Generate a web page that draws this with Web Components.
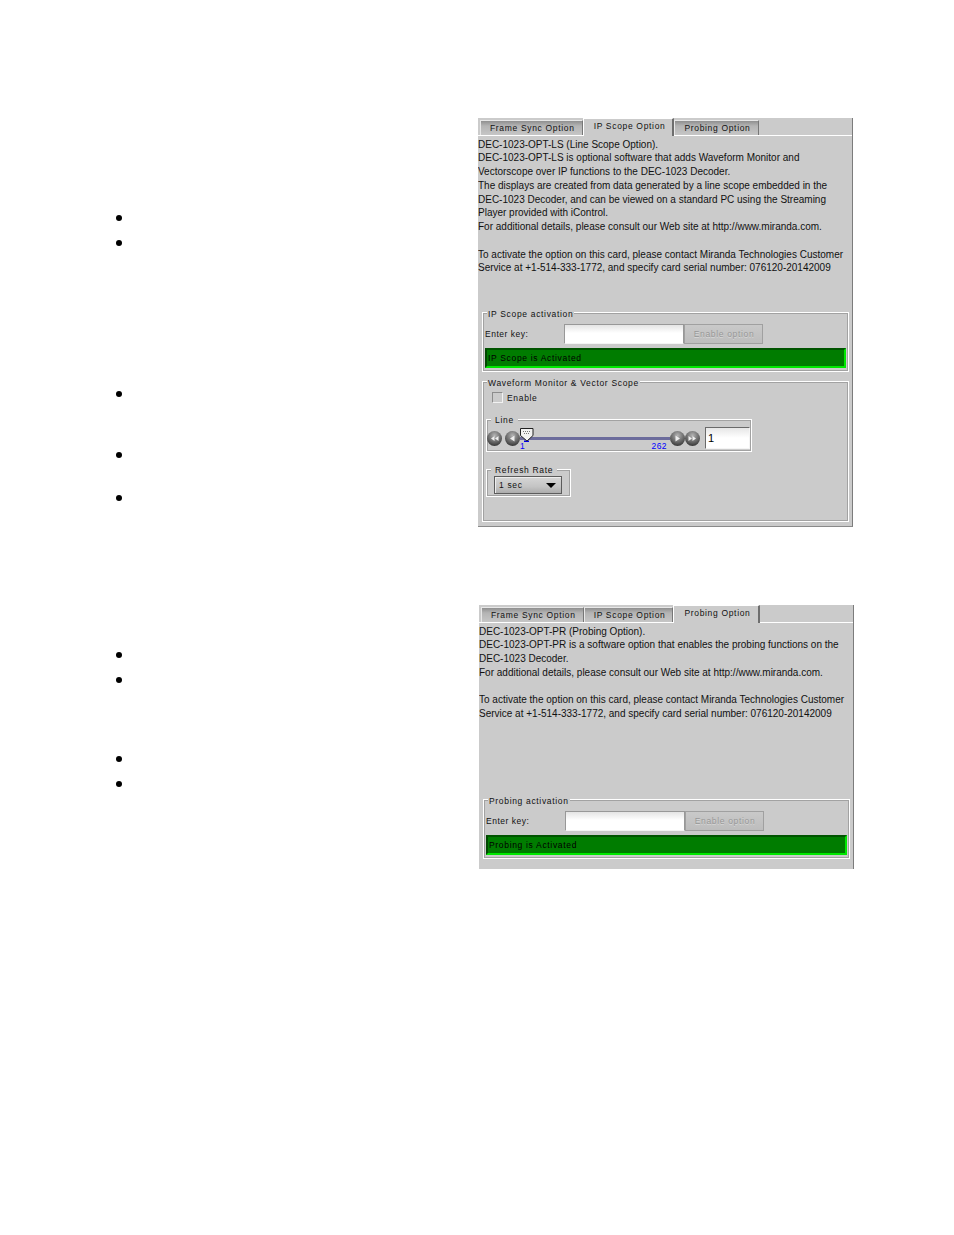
<!DOCTYPE html>
<html>
<head>
<meta charset="utf-8">
<title>DEC-1023 options</title>
<style>
  html, body { margin: 0; background: #fff; }
  body { font-family: "Liberation Sans", Arial, sans-serif; color: #000; }
</style>
</head>
<body>
<doc-page>
  <doc-row col="478" height="409" bullets="100,125,276,337,380">
    <option-panel closed tabs="Frame Sync Option|IP Scope Option|Probing Option" active="1">
      <panel-text style="height:176px">DEC-1023-OPT-LS (Line Scope Option).
DEC-1023-OPT-LS is optional software that adds Waveform Monitor and
Vectorscope over IP functions to the DEC-1023 Decoder.
The displays are created from data generated by a line scope embedded in the
DEC-1023 Decoder, and can be viewed on a standard PC using the Streaming
Player provided with iControl.
For additional details, please consult our Web site at http://www.miranda.com.

To activate the option on this card, please contact Miranda Technologies Customer
Service at +1-514-333-1772, and specify card serial number: 076120-20142009</panel-text>
      <activation-box legend="IP Scope activation" status="IP Scope is Activated"></activation-box>
      <scope-box></scope-box>
    </option-panel>
  </doc-row>
  <doc-row col="479" height="264" bullets="50,75,154,179" style="margin-top:78px">
    <option-panel tabs="Frame Sync Option|IP Scope Option|Probing Option" active="2">
      <panel-text style="height:176px">DEC-1023-OPT-PR (Probing Option).
DEC-1023-OPT-PR is a software option that enables the probing functions on the
DEC-1023 Decoder.
For additional details, please consult our Web site at http://www.miranda.com.

To activate the option on this card, please contact Miranda Technologies Customer
Service at +1-514-333-1772, and specify card serial number: 076120-20142009</panel-text>
      <activation-box legend="Probing activation" status="Probing is Activated"></activation-box>
    </option-panel>
  </doc-row>
</doc-page>

<script>
const panelBg = '#cbcbcb';
const smallText = `font: 8.5px/10px "Liberation Sans", Arial, sans-serif; letter-spacing: .67px; color: #111;`;

class DocPage extends HTMLElement {
  constructor() {
    super();
    this.attachShadow({ mode: 'open' }).innerHTML = `
      <style>:host { display: block; width: 954px; height: 1235px; padding-top: 118px; box-sizing: border-box; }</style>
      <slot></slot>`;
  }
}

class DocRow extends HTMLElement {
  constructor() {
    super();
    const col = this.getAttribute('col');
    const offsets = this.getAttribute('bullets').split(',').map(Number);
    let last = 0;
    const dots = offsets.map(o => {
      const gap = o - last - 3;
      last = o + 3;
      return `<i style="margin-top:${gap}px"></i>`;
    }).join('');
    this.attachShadow({ mode: 'open' }).innerHTML = `
      <style>
        :host { display: flex; height: ${this.getAttribute('height')}px; }
        .col { width: ${col}px; padding-left: 116px; box-sizing: border-box; flex: none; }
        i { display: block; width: 6px; height: 6px; border-radius: 50%; background: #000; }
      </style>
      <div class="col">${dots}</div>
      <slot></slot>`;
  }
}

class OptionPanel extends HTMLElement {
  constructor() {
    super();
    const active = Number(this.getAttribute('active'));
    const tabs = this.getAttribute('tabs').split('|').map((t, i) =>
      `<span class="tab ${i === active ? 'on' : ''}">${t}</span>`).join('');
    this.attachShadow({ mode: 'open' }).innerHTML = `
      <style>
        :host {
          display: block; width: 375px; box-sizing: border-box;
          background: ${panelBg};
          border-right: 1px solid #7c7c7c;
          ${this.hasAttribute('closed') ? 'border-bottom: 1px solid #8a8a8a;' : ''}
        }
        .bar {
          display: flex; align-items: flex-end; height: 17px; padding-left: 2px;
          border-bottom: 1px solid #fff;
        }
        .tab {
          ${smallText}
          height: 15px; box-sizing: border-box; padding: 2px 7px 0 9px; white-space: nowrap;
          background: linear-gradient(#8f8f8f, #b4b4b4 35%, #c6c6c6);
          border: 1px solid #e8e8e8; border-bottom: 0; border-right-color: #777;
        }
        .tab.on {
          height: 18px; margin-bottom: -1px; padding: 2px 7px 0 10px;
          background: ${panelBg};
          border-color: #fff; border-right: 2px solid #6e6e6e;
        }
      </style>
      <div class="bar">${tabs}</div>
      <slot></slot>`;
  }
}

class PanelText extends HTMLElement {
  constructor() {
    super();
    this.attachShadow({ mode: 'open' }).innerHTML = `
      <style>
        :host {
          display: block; box-sizing: border-box; padding-top: 1.5px;
          font: 10px/13.75px "Liberation Sans", Arial, sans-serif;
          overflow: hidden; color: #111;
        }
        slot { display: block; white-space: pre; }
      </style>
      <slot></slot>`;
  }
}

class GroupBox extends HTMLElement {
  constructor() {
    super();
    this.attachShadow({ mode: 'open' }).innerHTML = `
      <style>
        :host {
          display: block; position: relative; box-sizing: border-box;
          border: 1px solid #fff; box-shadow: inset 0 0 0 1px #a2a2a2;
        }
        .legend {
          ${smallText}
          position: absolute; left: 4px; top: var(--legend-top, -4px); padding: 0 1px;
          background: ${panelBg}; white-space: nowrap;
        }
      </style>
      <span class="legend">${this.getAttribute('legend')}</span>
      <slot></slot>`;
  }
}

class ActivationBox extends HTMLElement {
  constructor() {
    super();
    this.attachShadow({ mode: 'open' }).innerHTML = `
      <style>
        :host { display: block; margin-left: 4px; width: 367px; }
        group-box { height: 60px; padding: 11px 2px 0 2px; }
        .row { display: flex; height: 20px; align-items: stretch; }
        label { ${smallText} width: 79px; line-height: 20px; letter-spacing: .5px; }
        .key {
          width: 120px; box-sizing: border-box;
          background: linear-gradient(#e4e4e4, #fff 45%);
          border: 1px solid #989898; border-bottom-color: #f4f4f4;
        }
        .btn {
          ${smallText}
          width: 79px; box-sizing: border-box; padding-left: 1px; text-align: center; line-height: 19px;
          background: linear-gradient(#c9c9c9, #bdbdbd); color: #979797;
          border: 1px solid #a0a0a0; text-shadow: 0 1px 0 #d8d8d8;
        }
        .status {
          ${smallText}
          margin-top: 4px; height: 20px; box-sizing: border-box; padding: 3px 0 0 1px;
          background: #007c00; line-height: 11px;
          border: 2px solid; border-color: #005400 #00e800 #00e800 #004800;
          color: #000;
        }
      </style>
      <group-box legend="${this.getAttribute('legend')}">
        <div class="row">
          <label>Enter key:</label>
          <div class="key"></div>
          <div class="btn">Enable option</div>
        </div>
        <div class="status">${this.getAttribute('status')}</div>
      </group-box>`;
  }
}

class RoundButton extends HTMLElement {
  constructor() {
    super();
    const dir = this.getAttribute('dir');
    const glyphs = {
      first: '<path d="M7.5 5 4 7.5 7.5 10zM11.5 5 8 7.5 11.5 10z"/>',
      prev: '<path d="M9.5 4.5 5 7.5 9.5 10.5z"/>',
      next: '<path d="M5.5 4.5 10 7.5 5.5 10.5z"/>',
      last: '<path d="M3.5 5 7 7.5 3.5 10zM7.5 5 11 7.5 7.5 10z"/>'
    };
    this.attachShadow({ mode: 'open' }).innerHTML = `
      <style>
        :host { display: block; width: 15px; height: 15px; flex: none; }
        svg { display: block; }
      </style>
      <svg width="15" height="15" viewBox="0 0 15 15">
        <defs><radialGradient id="g" cx=".5" cy=".3" r=".75">
          <stop offset="0" stop-color="#b4b4b4"/><stop offset=".55" stop-color="#6c6c6c"/><stop offset="1" stop-color="#2e2e2e"/>
        </radialGradient></defs>
        <circle cx="7.5" cy="7.5" r="7.5" fill="url(#g)"/>
        <g fill="#eee">${glyphs[dir]}</g>
      </svg>`;
  }
}

class LineSlider extends HTMLElement {
  constructor() {
    super();
    this.attachShadow({ mode: 'open' }).innerHTML = `
      <style>
        :host { display: flex; align-items: flex-start; }
        round-button { margin-top: 4px; }
        round-button + round-button { margin-left: 3px; }
        .track { position: relative; width: 150px; padding-top: 10px; flex: none; }
        .rail { height: 3px; background: #6c6c9c; }
        .scale {
          display: flex; justify-content: space-between; padding-right: 3px;
          font: 8.5px/9px "Liberation Sans", Arial, sans-serif; letter-spacing: .4px; color: #0000ff;
          margin-top: 2px;
        }
        .thumb { position: absolute; left: 0; top: 1px; }
        .val {
          width: 45px; height: 22px; box-sizing: border-box; margin-left: 5px; padding: 3px 0 0 2px;
          background: linear-gradient(#e6e6e6, #fff 50%);
          border: 1px solid #6a6a6a; border-bottom-color: #f4f4f4; border-right-color: #f4f4f4;
          font: 11px/14px "Liberation Sans", Arial, sans-serif;
        }
      </style>
      <round-button dir="first"></round-button>
      <round-button dir="prev"></round-button>
      <div class="track">
        <div class="rail"></div>
        <div class="scale"><span>1</span><span>262</span></div>
        <svg class="thumb" width="14" height="15" viewBox="0 0 14 15">
          <path d="M4 12.5h5V14H4z" fill="#0000e6"/>
          <path d="M.5.5h12.5v7L7 13 .5 7.5z" fill="#f2f2f2" stroke="#222"/>
          <g fill="#777"><rect x="3" y="3" width="1" height="1"/><rect x="5" y="3" width="1" height="1"/><rect x="7" y="3" width="1" height="1"/><rect x="9" y="3" width="1" height="1"/><rect x="4" y="5" width="1" height="1"/><rect x="6" y="5" width="1" height="1"/><rect x="8" y="5" width="1" height="1"/></g>
        </svg>
      </div>
      <round-button dir="next"></round-button>
      <round-button dir="last" style="margin-left:0"></round-button>
      <div class="val">1</div>`;
  }
}

class ScopeBox extends HTMLElement {
  constructor() {
    super();
    this.attachShadow({ mode: 'open' }).innerHTML = `
      <style>
        :host { display: block; margin: 9px 0 0 4px; width: 367px; }
        group-box { height: 141px; padding: 10px 0 0 3px; }
        .check { display: flex; align-items: center; height: 11px; padding-left: 6px; ${smallText} }
        .box {
          width: 11px; height: 11px; box-sizing: border-box; margin-right: 4px;
          border: 1px solid #8c8c8c; border-right-color: #f2f2f2; border-bottom-color: #f2f2f2;
        }
        group-box.line { --legend-top: -5px; display: block; width: 266px; height: 33px; margin-top: 16px; padding: 7px 0 0 0; box-sizing: border-box; }
        group-box.rate { --legend-top: -5px; display: block; width: 85px; height: 28px; margin-top: 17px; padding: 6px 0 0 7px; box-sizing: border-box; }
        .select {
          ${smallText}
          display: flex; align-items: center; justify-content: space-between;
          width: 68px; height: 18px; box-sizing: border-box; padding: 0 5px 0 4px;
          background: linear-gradient(#d6d6d6, #c4c4c4 60%, #acacac);
          border: 1px solid #5c5c5c; box-shadow: inset 1px 1px 0 #eee;
        }
        .select i { width: 0; height: 0; border: 5px solid transparent; border-top-color: #000; border-bottom: 0; }
      </style>
      <group-box legend="Waveform Monitor &amp; Vector Scope">
        <div class="check"><span class="box"></span>Enable</div>
        <group-box class="line" legend="&nbsp;Line&nbsp;"><line-slider></line-slider></group-box>
        <group-box class="rate" legend="&nbsp;Refresh Rate&nbsp;">
          <div class="select"><span>1 sec</span><i></i></div>
        </group-box>
      </group-box>`;
  }
}

// children first, so nested elements upgrade with their attributes in place
customElements.define('round-button', RoundButton);
customElements.define('line-slider', LineSlider);
customElements.define('group-box', GroupBox);
customElements.define('panel-text', PanelText);
customElements.define('activation-box', ActivationBox);
customElements.define('scope-box', ScopeBox);
customElements.define('option-panel', OptionPanel);
customElements.define('doc-row', DocRow);
customElements.define('doc-page', DocPage);
</script>
</body>
</html>
